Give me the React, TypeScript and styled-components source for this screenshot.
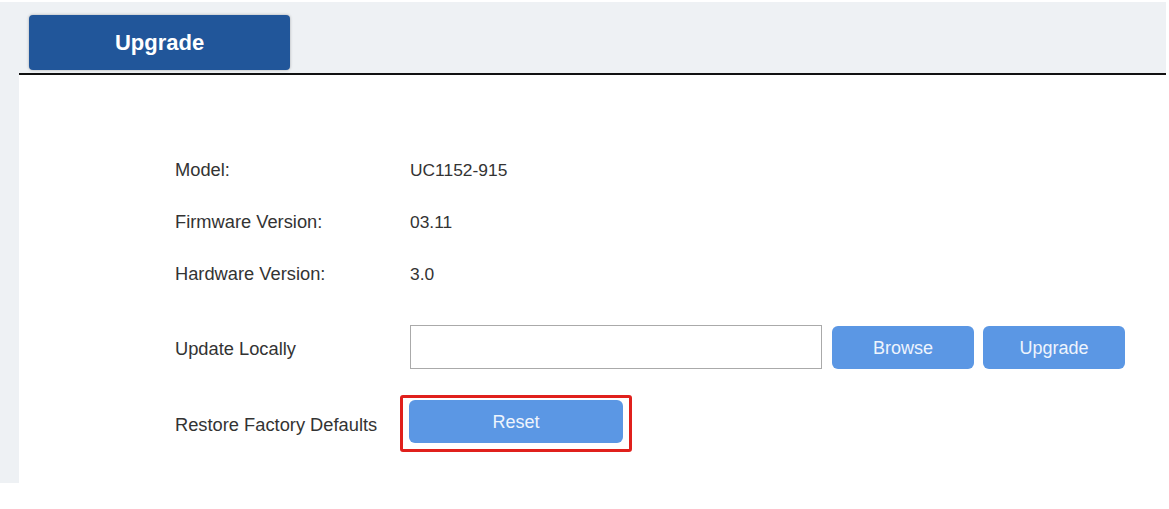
import React from 'react'
import styled, { createGlobalStyle } from 'styled-components'

const GlobalStyle = createGlobalStyle`
  html, body {
    margin: 0;
    padding: 0;
    background: #ffffff;
    font-family: 'Liberation Sans', Arial, sans-serif;
  }
`

const Frame = styled.div`
  width: 1147px;
  height: 481px;
  margin-top: 2px;
  padding-left: 19px;
  background: #eef1f4;
  display: flex;
  flex-direction: column;
`

const TabBar = styled.div`
  height: 71px;
  display: flex;
  align-items: flex-end;
  padding-left: 10px;
  border-bottom: 2px solid #111111;
`

const Tab = styled.div`
  width: 261px;
  height: 55px;
  margin-bottom: 3px;
  border-radius: 4px;
  background: #21569a;
  box-shadow: 0 0 3px rgba(0, 0, 0, 0.3);
  color: #ffffff;
  font-size: 22px;
  font-weight: bold;
  display: flex;
  align-items: center;
  justify-content: center;
`

const Content = styled.div`
  flex: 1;
  background: #ffffff;
  padding: 69px 0 0 156px;
  display: flex;
  flex-direction: column;
`

const InfoRow = styled.div`
  height: 52px;
  display: flex;
  align-items: center;
  color: #333333;
`

const ActionRow = styled.div<{ $top: number }>`
  margin-top: ${(p) => p.$top}px;
  display: flex;
  align-items: center;
  color: #333333;
`

const Label = styled.div<{ $drop?: number }>`
  width: 225px;
  flex-shrink: 0;
  font-size: 18.3px;
  padding-top: ${(p) => p.$drop ?? 0}px;
`

const Value = styled.div`
  padding-left: 10px;
  font-size: 17.4px;
`

const FileInput = styled.div`
  width: 410px;
  height: 42px;
  margin-left: 10px;
  margin-right: 10px;
  border: 1px solid #aaaaaa;
  background: #ffffff;
`

const Button = styled.button<{ $width: number }>`
  width: ${(p) => p.$width}px;
  height: 43px;
  border: none;
  border-radius: 6px;
  background: #5b97e4;
  color: #eef4fd;
  font-family: 'Liberation Sans', Arial, sans-serif;
  font-size: 18px;
  padding: 2px 0 0;
  & + & {
    margin-left: 9px;
  }
`

const Highlight = styled.div`
  padding: 2px 6px 6px 6px;
  border: 3px solid #e0201c;
  border-radius: 3px;
  display: flex;
`

export default function App() {
  const info = [
    ['Model:', 'UC1152-915'],
    ['Firmware Version:', '03.11'],
    ['Hardware Version:', '3.0'],
  ]
  return (
    <>
      <GlobalStyle />
      <Frame>
        <TabBar>
          <Tab>Upgrade</Tab>
        </TabBar>
        <Content>
          {info.map(([label, value]) => (
            <InfoRow key={label}>
              <Label>{label}</Label>
              <Value>{value}</Value>
            </InfoRow>
          ))}
          <ActionRow $top={25}>
            <Label $drop={3}>Update Locally</Label>
            <FileInput />
            <Button $width={142}>Browse</Button>
            <Button $width={142}>Upgrade</Button>
          </ActionRow>
          <ActionRow $top={26}>
            <Label $drop={3}>Restore Factory Defaults</Label>
            <Highlight>
              <Button $width={214}>Reset</Button>
            </Highlight>
          </ActionRow>
        </Content>
      </Frame>
    </>
  )
}
